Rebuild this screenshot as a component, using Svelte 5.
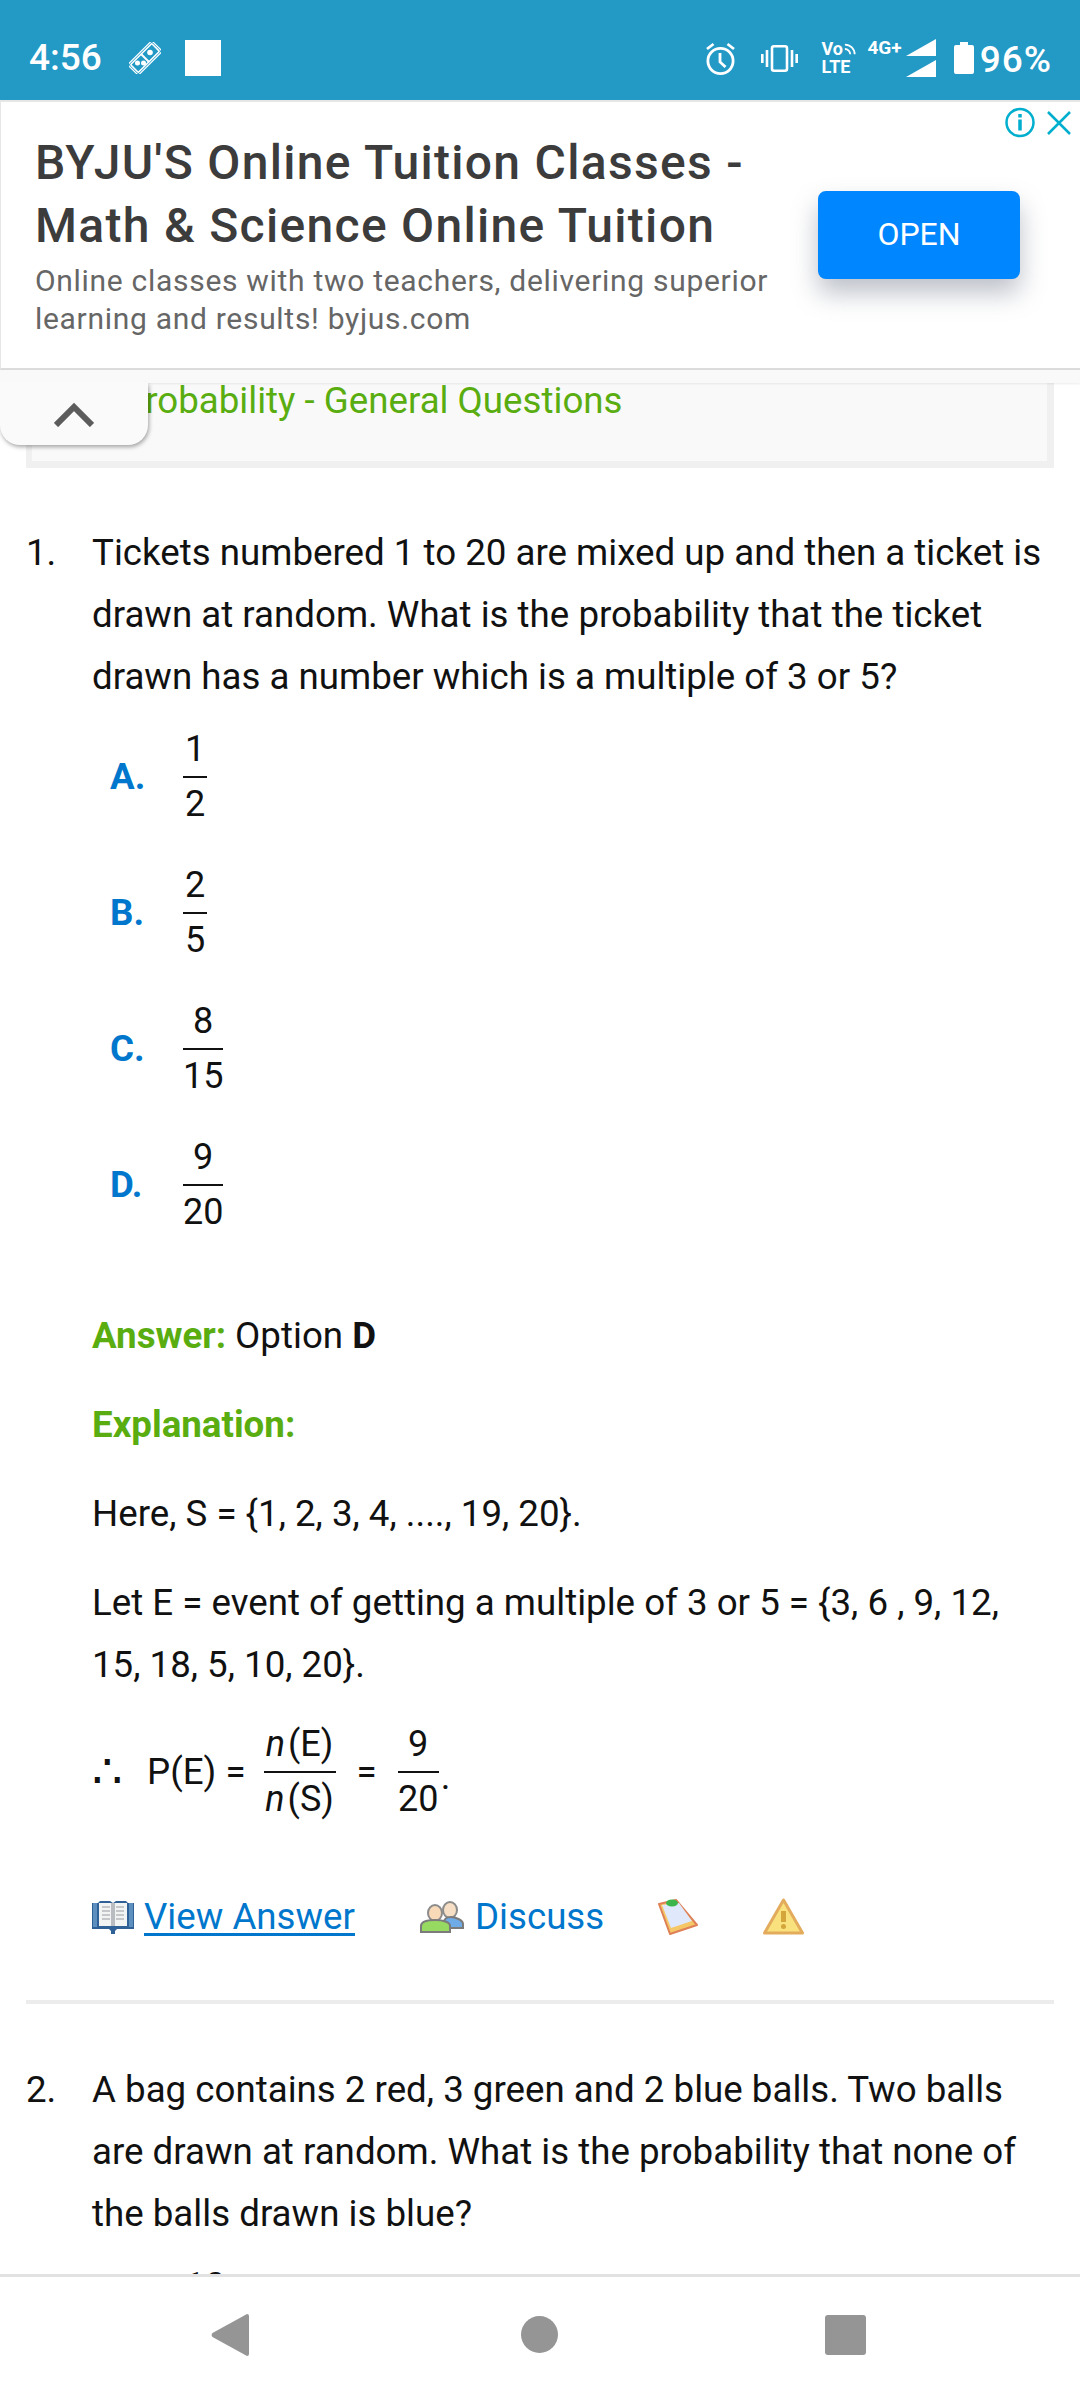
<script>
  // question data for the visible part of the page
  const options = [
    { label: 'A.', top: '1', bottom: '2' },
    { label: 'B.', top: '2', bottom: '5' },
    { label: 'C.', top: '8', bottom: '15' },
    { label: 'D.', top: '9', bottom: '20' }
  ];
</script>

<div class="phone">
  <header class="status">
    <div class="status-left">
      <span class="time">4:56</span>
      <svg class="domino" width="32" height="32" viewBox="0 0 32 32">
        <g transform="rotate(45 16 16)" fill="none" stroke="#fff">
          <rect x="8.500" y="-1" width="15" height="34" rx="2" stroke-width="1.200" />
          <rect x="10.500" y="1" width="11" height="30" rx="1" stroke-width="1.600" />
          <line x1="10" y1="16" x2="22" y2="16" stroke-width="2" />
        </g>
        <circle cx="21" cy="10.500" r="2.800" fill="#fff" />
        <circle cx="8.500" cy="21" r="2.500" fill="#fff" />
        <circle cx="14.500" cy="21" r="2.500" fill="#fff" />
      </svg>
      <span class="square"></span>
    </div>
    <div class="status-right">
      <svg class="alarm" width="31" height="33" viewBox="0 0 31 33" fill="none" stroke="#fff" stroke-width="2.800">
        <circle cx="15.500" cy="19" r="12.600" />
        <path d="M15 11v9l5.500 5M2 7l6.500-5M29 7l-6.500-5" />
      </svg>
      <svg class="vib" width="37" height="27" viewBox="0 0 37 27" fill="none" stroke="#fff" stroke-width="2.600">
        <rect x="11" y="1.300" width="15" height="24.400" rx="2" />
        <path d="M6 5v17M1.300 9v9M31 5v17M35.700 9v9" />
      </svg>
      <div class="volte">
        <span class="vo">Vo<svg width="14" height="14" viewBox="0 0 14 14" fill="none" stroke="#fff" stroke-width="2"><path d="M1 2a11 11 0 0 1 11 11M1 7a6 6 0 0 1 6 6" /></svg></span>
        <span>LTE</span>
      </div>
      <span class="fourg">4G+</span>
      <svg class="signal" width="30" height="38" viewBox="0 0 30 38" fill="#fff">
        <path d="M30 0v17H0zM30 21v17H0z" />
      </svg>
      <svg class="battery" width="20" height="32" viewBox="0 0 20 32" fill="#fff">
        <path d="M6 0h8v3h4a2 2 0 0 1 2 2v25a2 2 0 0 1-2 2H2a2 2 0 0 1-2-2V5a2 2 0 0 1 2-2h4z" />
      </svg>
      <span class="percent">96%</span>
    </div>
  </header>

  <section class="ad">
    <div class="ad-marks">
      <svg width="32" height="31" viewBox="0 0 32 31" fill="none" stroke="#00aecd" stroke-width="2.500">
        <circle cx="16" cy="15.500" r="13.500" />
        <path d="M16 12.500v11M16 7v3.500" stroke-width="3.500" />
      </svg>
      <svg width="24" height="24" viewBox="0 0 24 24" fill="none" stroke="#00aecd" stroke-width="2.500">
        <path d="M1 1l22 22M23 1L1 23" />
      </svg>
    </div>
    <div class="ad-copy">
      <div class="ad-title">BYJU'S Online Tuition Classes - Math &amp; Science Online Tuition</div>
      <div class="ad-text">Online classes with two teachers, delivering superior learning and results! byjus.com</div>
    </div>
    <div class="ad-open">OPEN</div>
  </section>

  <div class="ad-strip"></div>

  <main class="content">
    <button class="collapse" aria-label="Collapse ad">
      <svg width="40" height="25" viewBox="0 0 40 25" fill="none" stroke="#5c5c5c" stroke-width="6">
        <path d="M2 23L20 5l18 18" />
      </svg>
    </button>

    <div class="heading">Probability - General Questions</div>

    <article class="question first">
      <div class="q-row">
        <span class="num">1.</span>
        <p>Tickets numbered 1 to 20 are mixed up and then a ticket is drawn at random. What is the probability that the ticket drawn has a number which is a multiple of 3 or 5?</p>
      </div>

      <div class="options">
        {#each options as opt}
          <div class="option">
            <span class="opt-label">{opt.label}</span>
            <span class="frac">
              <span class="over">{opt.top}</span>
              <span>{opt.bottom}</span>
            </span>
          </div>
        {/each}
      </div>

      <div class="answer">
        <p><b class="green">Answer:</b> Option <b>D</b></p>
        <p><b class="green">Explanation:</b></p>
        <p>Here, S = {'{'}1, 2, 3, 4, ...., 19, 20{'}'}.</p>
        <p>Let E = event of getting a multiple of 3 or 5 = {'{'}3, 6 , 9, 12, 15, 18, 5, 10, 20{'}'}.</p>
        <div class="formula">
          <span class="therefore">∴</span>
          <span>P(E) =</span>
          <span class="frac wide">
            <span class="over"><i>n</i>(E)</span>
            <span><i>n</i>(S)</span>
          </span>
          <span class="eq">=</span>
          <span class="frac last">
            <span class="over">9</span>
            <span>20</span>
          </span><span class="dot">.</span>
        </div>
      </div>

      <div class="actions">
        <span class="action">
          <svg class="icon" width="42" height="34" viewBox="0 0 42 34">
            <path d="M0 3h6l2-2h10l3 2 3-2h10l2 2h6v26H25l-2 2v3h-4v-3l-2-2H0z" fill="#2f6197" />
            <path d="M1 3h4v24H1zM37 3h4v24h-4z" fill="#5d8fbf" />
            <path d="M7 3h13v23H7zM22 3h13v23H22z" fill="#f2f3f3" />
            <path d="M10 7h8M10 11h8M10 15h8M10 19h8M24 7h8M24 11h8M24 15h8M24 19h8" stroke="#c5c8ca" stroke-width="2" />
            <path d="M19 3h4v23h-4z" fill="#b9bcc0" />
          </svg>
          <a href="#view" class="underlined">View Answer</a>
        </span>
        <span class="action discuss">
          <svg class="icon" width="44" height="32" viewBox="0 0 44 32">
            <ellipse cx="30" cy="9" rx="7" ry="8" fill="#f6dfc4" stroke="#8c8c8c" stroke-width="2" />
            <path d="M24 27v-6c0-3 3-5 7-5s12 3 12 7v4z" fill="#6fabe6" stroke="#7b7b7b" stroke-width="2" />
            <ellipse cx="15" cy="12" rx="7" ry="8" fill="#f8d9b8" stroke="#8c8c8c" stroke-width="2" />
            <path d="M1 31v-6c0-4 6-6 14-6s15 2 15 6v6z" fill="#96da62" stroke="#7b7b7b" stroke-width="2" />
          </svg>
          <a href="#discuss">Discuss</a>
        </span>
        <svg class="icon clip" width="40" height="38" viewBox="0 0 40 38">
          <path d="M1 6L18 2l21 25-27 9z" fill="#f5c766" stroke="#de8058" stroke-width="2" stroke-linejoin="round" />
          <path d="M4 7l17-2 13 18-21 7z" fill="#dfe9fb" />
          <ellipse cx="14" cy="5" rx="6" ry="3.500" fill="#3cb64a" />
        </svg>
        <svg class="icon warn" width="41" height="38" viewBox="0 0 41 38">
          <path d="M20.500 2L39.500 35H1.500z" fill="#f9e27e" stroke="#e3ab5c" stroke-width="3" stroke-linejoin="round" />
          <path d="M20.500 13v11" stroke="#d3a53a" stroke-width="5" />
          <circle cx="20.500" cy="28.500" r="2.500" fill="#d3a53a" />
        </svg>
      </div>
    </article>

    <hr />

    <article class="question second">
      <div class="q-row">
        <span class="num">2.</span>
        <p>A bag contains 2 red, 3 green and 2 blue balls. Two balls are drawn at random. What is the probability that none of the balls drawn is blue?</p>
      </div>
      <div class="options">
        <div class="option">
          <span class="opt-label">A.</span>
          <span class="frac"><span class="over">10</span><span>21</span></span>
        </div>
      </div>
    </article>
  </main>

  <nav class="nav">
    <svg width="38" height="42" viewBox="0 0 38 42" fill="#959595">
      <path d="M36 0a2 2 0 0 1 2 2v38a2 2 0 0 1-2 2L1.500 23a3 3 0 0 1 0-4z" />
    </svg>
    <span class="home"></span>
    <span class="recent"></span>
  </nav>
</div>

<style>
  :global(body) {
    margin: 0;
    background: #fff;
  }

  .phone {
    width: 1080px;
    height: 2400px;
    display: flex;
    flex-direction: column;
    overflow: hidden;
    font-family: Roboto, "Liberation Sans", sans-serif;
    color: #111;
  }

  /* status bar */
  .status {
    height: 100px;
    flex: none;
    box-sizing: border-box;
    padding: 38px 28px 0 29px;
    background: #2399c6;
    color: #fff;
    display: flex;
    justify-content: space-between;
    align-items: flex-start;
  }

  .status-left {
    display: flex;
    align-items: center;
  }

  .time {
    font-size: 37px;
    line-height: 40px;
    font-weight: 500;
  }

  .domino {
    margin-left: 27px;
  }

  .square {
    width: 36px;
    height: 36px;
    margin-left: 24px;
    background: #fff;
  }

  .status-right {
    display: flex;
    align-items: flex-start;
  }

  .alarm {
    margin-top: 4px;
  }

  .vib {
    margin: 7px 0 0 25px;
  }

  .volte {
    width: 35px;
    margin: 2px 0 0 23px;
    font-size: 18px;
    line-height: 18px;
    font-weight: 700;
    display: flex;
    flex-direction: column;
  }

  .vo {
    display: flex;
    align-items: center;
    gap: 1px;
  }

  .fourg {
    margin-left: 11px;
    font-size: 19px;
    line-height: 20px;
    font-weight: 700;
  }

  .signal {
    margin: 1px 0 0 4px;
  }

  .battery {
    margin: 4px 0 0 18px;
  }

  .percent {
    margin-left: 6px;
    font-size: 37px;
    line-height: 44px;
    font-weight: 500;
    letter-spacing: 1px;
  }

  /* ad banner */
  .ad {
    position: relative;
    height: 270px;
    flex: none;
    box-sizing: border-box;
    border-top: 2px solid #e6e6e6;
    border-left: 1px solid #e6e6e6;
    border-bottom: 2px solid #dcdcdc;
    padding: 29px 0 0 34px;
    background: #fff;
    display: flex;
  }

  .ad-marks {
    position: absolute;
    top: 5px;
    right: 9px;
    display: flex;
    align-items: center;
    gap: 11px;
  }

  .ad-copy {
    width: 746px;
  }

  .ad-title {
    font-size: 48px;
    line-height: 63px;
    font-weight: 500;
    color: #3c3c3c;
    letter-spacing: 1.3px;
  }

  .ad-text {
    margin-top: 5px;
    font-size: 30px;
    line-height: 38px;
    color: #666;
    letter-spacing: 0.7px;
  }

  .ad-open {
    width: 202px;
    height: 88px;
    margin: 60px 0 0 37px;
    border-radius: 8px;
    background: #0086ff;
    color: #fff;
    font-size: 32px;
    line-height: 86px;
    text-align: center;
    box-shadow: 0 14px 26px rgba(90, 100, 120, 0.4);
  }

  .ad-strip {
    height: 13px;
    flex: none;
    background: #f9f9f9;
    box-shadow: 0 1px 2px rgba(0, 0, 0, 0.08);
    position: relative;
    z-index: 1;
  }

  /* page content */
  .content {
    position: relative;
    flex: 1;
    min-height: 0;
    overflow: hidden;
    padding: 0 26px;
    font-size: 36.7px;
    line-height: 62px;
  }

  .collapse {
    position: absolute;
    top: 0;
    left: 0;
    width: 148px;
    height: 62px;
    padding: 0;
    border: 0;
    border-radius: 0 0 20px 20px;
    background: #fafafa;
    box-shadow: 1px 2px 4px rgba(0, 0, 0, 0.35);
    display: flex;
    align-items: center;
    justify-content: center;
    z-index: 2;
  }

  .heading {
    height: 95px;
    box-sizing: border-box;
    padding-left: 90px;
    margin-top: -10px;
    background: #f9f9f9;
    border: 7px solid #f0f0f0;
    border-top: 0;
    border-left-width: 6px;
    color: #5aad10;
    line-height: 55px;
  }

  .question.first {
    margin-top: 54px;
  }

  .question.second {
    margin-top: 55px;
  }

  .q-row {
    display: flex;
  }

  .num {
    width: 66px;
    flex: none;
  }

  p {
    margin: 0;
  }

  .options {
    margin: 12px 0 0 84px;
    display: flex;
    flex-direction: column;
    gap: 22px;
  }

  .option {
    display: flex;
    align-items: center;
    height: 114px;
  }

  .opt-label {
    width: 73px;
    color: #0077cc;
    font-weight: 700;
  }

  .frac {
    display: inline-flex;
    flex-direction: column;
    align-items: stretch;
    text-align: center;
    font-size: 36px;
    line-height: 53px;
  }

  .over {
    border-bottom: 2px solid #111;
    padding: 0 2px;
  }

  .answer {
    margin: 63px 0 0 66px;
  }

  .answer p {
    margin-bottom: 27px;
  }

  .green {
    color: #5aad10;
  }

  .formula {
    margin-top: -6px;
    display: flex;
    align-items: center;
    height: 110px;
  }

  .therefore {
    width: 55px;
    font-size: 48px;
  }

  .formula .wide {
    width: 72px;
    margin-left: 18px;
    white-space: nowrap;
  }

  .formula .wide .over {
    padding: 0;
  }

  .formula i {
    margin-right: 3px;
  }

  .eq {
    margin-left: 21px;
  }

  .formula .last {
    width: 41px;
    margin-left: 21px;
  }

  .formula .last .over {
    padding: 0;
  }

  .dot {
    margin: 10px 0 0 2px;
  }

  .actions {
    margin: 59px 0 0 66px;
    display: flex;
    align-items: center;
    height: 62px;
  }

  .action {
    display: flex;
    align-items: center;
    gap: 10px;
  }

  .action a {
    color: #0077cc;
    text-decoration: none;
  }

  .action a.underlined {
    text-decoration: underline;
    text-underline-offset: 4px;
  }

  .discuss {
    margin-left: 65px;
    gap: 11px;
  }

  .icon {
    filter: blur(0.5px);
  }

  .clip {
    margin-left: 54px;
  }

  .warn {
    margin-left: 65px;
  }

  hr {
    margin: 52px 0 0;
    border: 0;
    height: 4px;
    background: #ececec;
  }

  /* bottom navigation */
  .nav {
    height: 126px;
    flex: none;
    box-sizing: border-box;
    border-top: 3px solid #e2e2e2;
    background: #fff;
    display: flex;
    align-items: center;
    padding: 0 0 8px 211px;
    position: relative;
    z-index: 1;
  }

  .home {
    width: 37px;
    height: 37px;
    margin-left: 272px;
    border-radius: 50%;
    background: #959595;
  }

  .recent {
    width: 41px;
    height: 40px;
    margin-left: 267px;
    border-radius: 3px;
    background: #959595;
  }
</style>
